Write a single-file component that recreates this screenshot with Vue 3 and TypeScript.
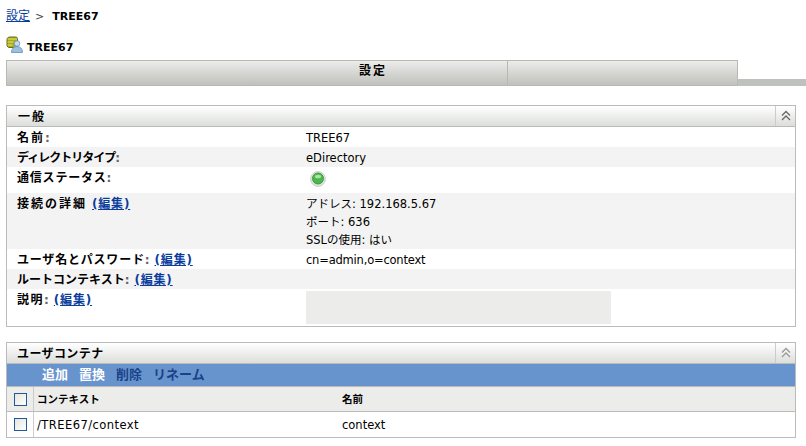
<script setup lang="ts">
interface Row {
  label: string
  colon: boolean
  edit: boolean
  lines: string[]
  kind: string
  spacing: number
}

const rows: Row[] = [
  { label: '名前', colon: true, edit: false, lines: ['TREE67'], kind: 'h20', spacing: 2 },
  { label: 'ディレクトリタイプ', colon: true, edit: false, lines: ['eDirectory'], kind: 'h20 alt', spacing: -1 },
  { label: '通信ステータス', colon: true, edit: false, lines: [], kind: 'h26 status', spacing: 0.8 },
  { label: '接続の詳細', colon: false, edit: true, lines: ['アドレス: 192.168.5.67', 'ポート: 636', 'SSLの使用: はい'], kind: 'h56 alt', spacing: 2 },
  { label: 'ユーザ名とパスワード', colon: true, edit: true, lines: ['cn=admin,o=context'], kind: 'h20 tight', spacing: 0.8 },
  { label: 'ルートコンテキスト', colon: true, edit: true, lines: [], kind: 'h20 alt', spacing: 0 },
  { label: '説明', colon: true, edit: true, lines: [], kind: 'desc', spacing: 1.5 },
]
</script>

<template>
  <div class="page">
    <div class="crumb"><a href="#">設定</a><span class="sep">&gt;</span><b>TREE67</b></div>

    <div class="title">
      <svg width="17" height="17" viewBox="0 0 17 17">
        <path d="M1 2.500 3 1h7.500l1 1.500V10l-2 1.500H2.500L1 10z" fill="#a8aa22" stroke="#5f6014" stroke-width="0.9" />
        <path d="M1.500 3h9.500M1.500 6h6M1.500 9h5" fill="none" stroke="#e8e860" stroke-width="1.200" />
        <circle cx="11" cy="7.500" r="2.800" fill="#c4daee" stroke="#5f8fb8" stroke-width="0.8" />
        <path d="M5.500 16.500c0-4 2.500-6 5.500-6s5.500 2 5.500 6z" fill="#9cc0e0" stroke="#5f8fb8" stroke-width="0.8" />
      </svg>
      <span>TREE67</span>
    </div>

    <div class="tabs">
      <div class="tab first">設定</div>
      <div class="tab second"></div>
      <div class="tab-rest"></div>
    </div>

    <section class="panel general">
      <header class="panel-head">
        <span class="wide">一般</span>
        <div class="collapse">
          <svg width="12" height="12" viewBox="0 0 12 12" fill="none" stroke="#666" stroke-width="1.300">
            <path d="M2 5.500 6 1.500l4 4M2 10l4-4 4 4" />
          </svg>
        </div>
      </header>
      <div v-for="row in rows" :key="row.label" class="row" :class="row.kind">
        <div class="label">
          <b :style="{ letterSpacing: row.spacing + 'px' }">{{ row.label }}</b><b v-if="row.colon" class="colon">:</b>
          <a v-if="row.edit" href="#" class="edit">(編集)</a>
        </div>
        <div class="value">
          <div v-for="line in row.lines" :key="line" class="line">{{ line }}</div>
          <svg v-if="row.kind.includes('status')" class="led" width="16" height="16" viewBox="0 0 16 16">
            <circle cx="8" cy="8" r="7.500" fill="#dfe2df" stroke="#bcbfbc" stroke-width="0.6" />
            <circle cx="8" cy="7.500" r="5.500" fill="#4cb84c" stroke="#2f8f3a" stroke-width="0.8" />
            <ellipse cx="8" cy="5.500" rx="3.200" ry="1.800" fill="#a8e4a4" />
          </svg>
          <div v-if="row.kind === 'desc'" class="desc-box"></div>
        </div>
      </div>
    </section>

    <section class="panel users">
      <header class="panel-head">
        <span class="narrow">ユーザコンテナ</span>
        <div class="collapse">
          <svg width="12" height="12" viewBox="0 0 12 12" fill="none" stroke="#999" stroke-width="1.300">
            <path d="M2 5.500 6 1.500l4 4M2 10l4-4 4 4" />
          </svg>
        </div>
      </header>
      <div class="toolbar">
        <b class="on">追加</b>
        <b class="on">置換</b>
        <b>削除</b>
        <b>リネーム</b>
      </div>
      <div class="grid-row head">
        <div class="check"><i></i></div>
        <div class="ctx"><b>コンテキスト</b></div>
        <div class="nm"><b>名前</b></div>
      </div>
      <div class="grid-row">
        <div class="check"><i></i></div>
        <div class="ctx spaced">/TREE67/context</div>
        <div class="nm">context</div>
      </div>
    </section>
  </div>
</template>

<style scoped>
.page {
  width: 806px;
  height: 446px;
  overflow: hidden;
  box-sizing: border-box;
  padding-top: 8px;
  font-family: "DejaVu Sans", "Noto Sans CJK JP", sans-serif;
  font-size: 12px;
  color: #000;
  background: #fff;
}

a {
  color: #0a3c9c;
}

.crumb {
  height: 16px;
  line-height: 16px;
  padding-left: 6px;
  font-size: 12px;
}

.crumb b {
  font-size: 11px;
}

.sep {
  margin: 0 8px 0 5px;
  color: #444;
  font-size: 11px;
}

.title {
  display: flex;
  align-items: flex-start;
  gap: 4px;
  height: 22px;
  margin-top: 12px;
  padding-left: 6px;
  font-size: 11px;
  font-weight: bold;
}

.title span {
  padding-top: 4px;
  line-height: 16px;
}

.tabs {
  display: flex;
  height: 27px;
  margin-top: 2px;
  margin-left: 6px;
}

.tab {
  box-sizing: border-box;
  height: 26px;
  background: linear-gradient(#ececea, #bfc1bc);
  border: 1px solid #b8b8b4;
  text-align: center;
  font-weight: bold;
  font-size: 12px;
  line-height: 20px;
}

.tab.first {
  width: 501px;
  padding-left: 232px;
  letter-spacing: 2px;
  border-right: none;
}

.tab.second {
  width: 231px;
}

.tab-rest {
  flex: 1;
  height: 7px;
  margin-top: 19px;
  background: #bfc1bc;
}

.panel {
  box-sizing: border-box;
  width: 790px;
  margin-left: 6px;
  border: 1px solid #bbb;
}

.general {
  margin-top: 18px;
}

.users {
  margin-top: 15px;
}

.panel-head {
  display: flex;
  justify-content: space-between;
  height: 21px;
  line-height: 22px;
  padding-left: 10px;
  box-sizing: border-box;
  background: linear-gradient(#fff, #dcdedb);
  border-bottom: 1px solid #bbb;
  font-weight: bold;
}

.wide {
  margin-left: 1px;
  letter-spacing: 2px;
}

.narrow {
  letter-spacing: 0.4px;
}

.collapse {
  display: flex;
  align-items: center;
  justify-content: center;
  width: 19px;
  border-left: 1px solid #ccc;
}

.row {
  display: flex;
  box-sizing: border-box;
}

.row.alt {
  background: #f3f3f3;
}

.h20 {
  height: 20px;
}

.h26 {
  height: 26px;
}

.h56 {
  height: 56px;
}

.desc {
  height: 37px;
}

.label {
  width: 299px;
  padding: 3px 0 0 10px;
  box-sizing: border-box;
  line-height: 16px;
  white-space: nowrap;
}

.colon {
  color: #666;
}

.edit {
  margin-left: 5px;
  font-weight: bold;
  letter-spacing: 0.8px;
}

.value {
  flex: 1;
  padding-top: 3px;
  line-height: 16px;
  font-size: 11.500px;
}

.line {
  height: 18px;
}

.tight .line {
  letter-spacing: -0.2px;
}

.led {
  margin: 1px 0 0 4px;
  display: block;
}

.desc-box {
  width: 305px;
  height: 33px;
  margin-top: -1px;
  background: #ecedeb;
}

.toolbar {
  display: flex;
  gap: 11px;
  height: 23px;
  line-height: 22px;
  padding-left: 35px;
  box-sizing: border-box;
  background: #6894ce;
  color: #1a4288;
  border-bottom: 1px solid #bbb;
  font-size: 13px;
}

.toolbar .on {
  color: #fff;
}

.grid-row {
  display: flex;
  height: 25px;
  line-height: 26px;
  font-size: 11.500px;
  box-sizing: border-box;
  border-bottom: 1px solid #bbb;
}

.grid-row:last-child {
  border-bottom: none;
}

.grid-row.head {
  background: #ecedeb;
  font-size: 10.500px;
  line-height: 24px;
}

.check {
  display: flex;
  align-items: center;
  justify-content: center;
  width: 27px;
  border-right: 1px solid #ccc;
  box-sizing: border-box;
}

.check i {
  display: block;
  width: 13px;
  height: 13px;
  box-sizing: border-box;
  border: 1px solid #1f5a96;
  background: linear-gradient(135deg, #e4e4e0, #fff);
}

.ctx {
  width: 308px;
  padding-left: 3px;
  box-sizing: border-box;
}

.spaced {
  letter-spacing: 0.45px;
}
</style>
